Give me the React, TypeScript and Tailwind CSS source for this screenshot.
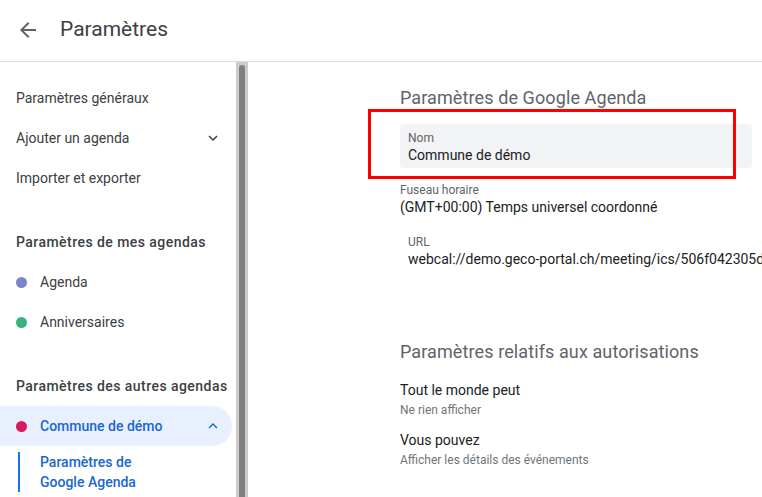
import React from "react";

const ChevronDown = () => (
  <svg width="18" height="18" viewBox="0 0 24 24" fill="#3c4043">
    <path d="M16.59 8.59 12 13.17 7.41 8.59 6 10l6 6 6-6z" />
  </svg>
);
const ChevronUp = () => (
  <svg width="18" height="18" viewBox="0 0 24 24" fill="#1967d2">
    <path d="M12 8l-6 6 1.41 1.41L12 10.83l4.59 4.58L18 14z" />
  </svg>
);

export default function App() {
  const font = { fontFamily: "Roboto, 'Liberation Sans', sans-serif" };
  return (
    <div className="relative w-[762px] h-[497px] overflow-hidden bg-white text-[#3c4043]" style={font}>
      {/* header */}
      <div className="h-[62px] border-b border-[#dadce0] flex items-center">
        <div className="ml-[16px] w-[24px] h-[24px] flex items-center justify-center mt-[-2px]">
          <svg width="24" height="24" viewBox="0 0 24 24" fill="#5f6368">
            <path d="M20 11H7.83l5.59-5.59L12 4l-8 8 8 8 1.41-1.41L7.83 13H20v-2z" />
          </svg>
        </div>
        <div className="ml-[20px] text-[21px] text-[#3c4043] mt-[-2px]">Paramètres</div>
      </div>
      <div className="flex h-[435px]">
        {/* sidebar */}
        <div className="w-[236px] shrink-0 pt-[16px] text-[14px]">
          <div className="h-10 flex items-center pl-[16px] w-[232px]">Paramètres généraux</div>
          <div className="h-10 flex items-center justify-between pl-[16px] pr-[10px] w-[232px]">
            <span>Ajouter un agenda</span>
            <ChevronDown />
          </div>
          <div className="h-10 flex items-center pl-[16px] w-[232px]">Importer et exporter</div>
          <div className="h-6" />
          <div className="h-10 flex items-center pl-[16px] text-[14px] font-medium tracking-[0.45px]">Paramètres de mes agendas</div>
          <div className="h-10 flex items-center pl-[16px] w-[232px]">
            <span className="w-[11px] h-[11px] rounded-full bg-[#7986cb]" />
            <span className="ml-[13px]">Agenda</span>
          </div>
          <div className="h-10 flex items-center pl-[16px] w-[232px]">
            <span className="w-[11px] h-[11px] rounded-full bg-[#33b679]" />
            <span className="ml-[13px]">Anniversaires</span>
          </div>
          <div className="h-6" />
          <div className="h-10 flex items-center pl-[16px] text-[14px] font-medium tracking-[0.45px]">Paramètres des autres agendas</div>
          <div className="h-10 flex items-center justify-between pl-[16px] pr-[10px] w-[232px] bg-[#e8f0fe] rounded-r-full">
            <div className="flex items-center">
              <span className="w-[11px] h-[11px] rounded-full bg-[#d81b60]" />
              <span className="ml-[13px] text-[#1967d2] font-medium">Commune de démo</span>
            </div>
            <ChevronUp />
          </div>
          <div className="mt-[6px] ml-[18px] border-l-2 border-[#1a73e8] pl-[20px] text-[#1967d2] font-medium leading-[20px]">
            <div>Paramètres de</div>
            <div>Google Agenda</div>
          </div>
        </div>
        {/* scrollbar */}
        <div className="w-[12px] shrink-0 bg-[#cdcbc9] pt-[3px] px-[3px]">
          <div className="w-[6px] h-full bg-[#7e8282] rounded-t-[3px]" />
        </div>
        {/* main */}
        <div className="flex-1 min-w-0 overflow-hidden pl-[152px] pt-[24px] whitespace-nowrap">
          <div className="text-[18px] text-[#5f6368] leading-[24px] tracking-[0.1px]">Paramètres de Google Agenda</div>
          <div className="mt-[14px] w-[352px] h-[44px] bg-[#f1f3f4] rounded-[4px] px-[8px] pt-[7px]">
            <div className="text-[12px] text-[#5f6368] leading-[14px]">Nom</div>
            <div className="text-[14px] text-[#202124] leading-[20px]">Commune de démo</div>
          </div>
          <div className="mt-[15px] text-[12px] text-[#5f6368] leading-[14px]">Fuseau horaire</div>
          <div className="text-[14px] text-[#202124] leading-[20px]">(GMT+00:00) Temps universel coordonné</div>
          <div className="mt-[18px] pl-[8px] text-[12px] text-[#5f6368] leading-[14px]">URL</div>
          <div className="pl-[8px] text-[14px] text-[#202124] leading-[20px]">webcal://demo.geco-portal.ch/meeting/ics/506f042305d8a1b7c9e</div>
          <div className="mt-[71px] text-[18px] text-[#5f6368] leading-[24px] tracking-[0.1px]">Paramètres relatifs aux autorisations</div>
          <div className="mt-[16px] text-[14px] text-[#202124] leading-[20px]">Tout le monde peut</div>
          <div className="text-[12px] text-[#70757a] leading-[20px]">Ne rien afficher</div>
          <div className="mt-[10px] text-[14px] text-[#202124] leading-[20px]">Vous pouvez</div>
          <div className="text-[12px] text-[#70757a] leading-[20px]">Afficher les détails des événements</div>
        </div>
      </div>
      {/* red annotation */}
      <div className="absolute left-[368px] top-[109px] w-[368px] h-[70px] border-[3px] border-[#ff0000]" />
    </div>
  );
}
